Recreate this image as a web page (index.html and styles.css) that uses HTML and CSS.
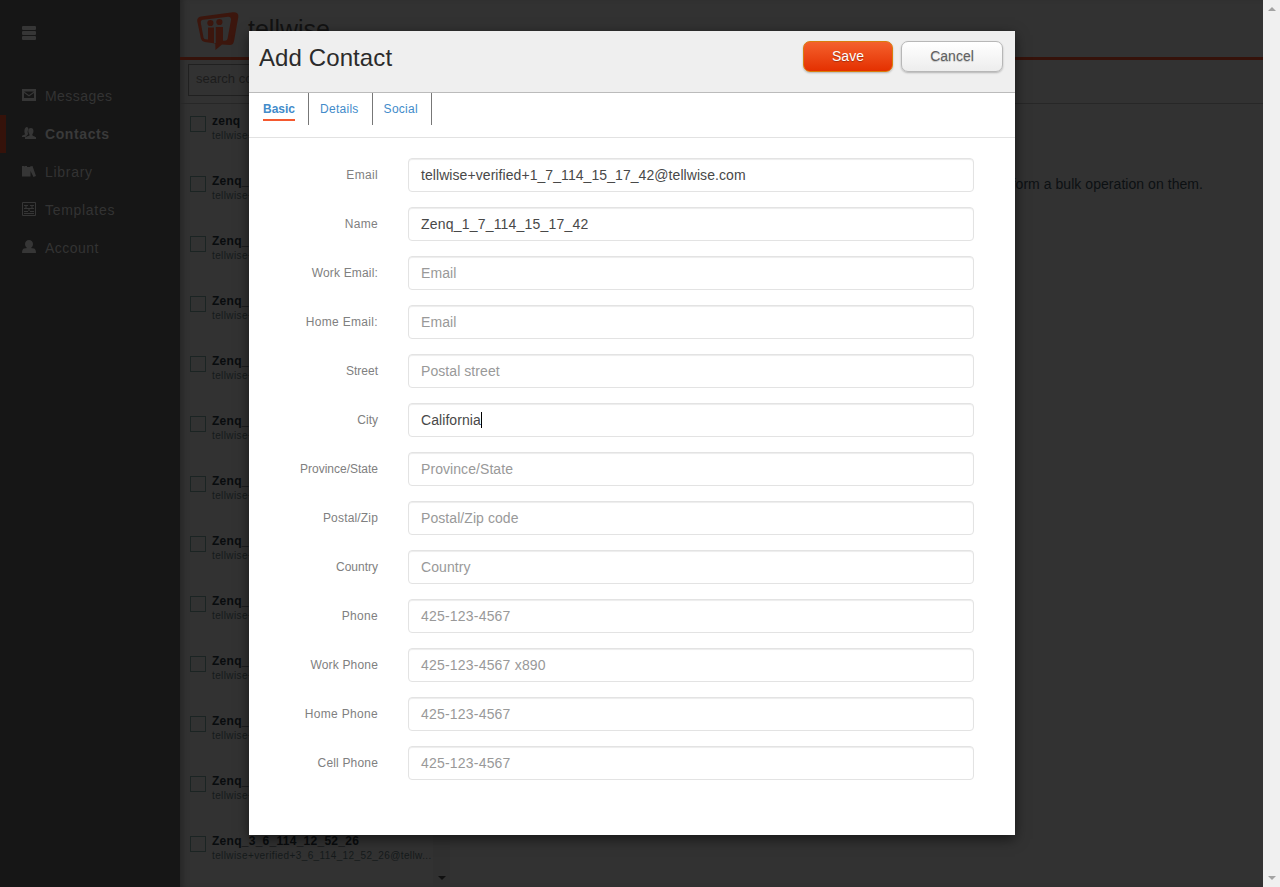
FILE: index.html
```
<!DOCTYPE html>
<html lang="en">
<head>
<meta charset="utf-8">
<title>Tellwise - Contacts</title>
<link rel="stylesheet" href="styles.css">
</head>
<body>
<div class="app">
  <nav class="sidebar">
    <svg class="menu" width="14" height="14" viewBox="0 0 14 14"><rect width="14" height="4" rx="1"/><rect y="5" width="14" height="4" rx="1"/><rect y="10" width="14" height="4" rx="1"/></svg>
    <a class="nav-item"><svg width="14" height="14" viewBox="0 0 14 14"><path fill-rule="evenodd" d="M0 1h14v12H0zM2 5v5h10V5L7 8.500zM2 3.500L7 7l5-3.500z"/></svg>Messages</a>
    <a class="nav-item active"><svg width="14" height="14" viewBox="0 0 14 14"><path d="M4.500 1C6 1 6.500 2 6.300 3.500 5.300 5 5.500 6.500 6.300 8L3.500 11H0V9.700L3.300 8.300C2 7 2 1.500 4.500 1z"/><path d="M8.800 2C11 2 12 4 11.300 6.500L10.300 8.600 10.500 9.600 14 11.300V13H3V11.300L7.500 9.600 7.500 8.500C5.500 5 6 2 8.800 2z"/></svg>Contacts</a>
    <a class="nav-item wide"><svg width="14" height="14" viewBox="0 0 14 14"><path d="M0 2h2l.500.500.500-.500h2v1h3V2.500L10.500 2 14 12l-2.500 1L8.500 7v5.500H0z"/></svg>Library</a>
    <a class="nav-item wide"><svg width="14" height="14" viewBox="0 0 14 14"><path class="line" d="M.5.5h13v13H.5zM2 3.500h4M8 3.500h4M2 6.500h10M2 9.500h4M8 9.500h4M2 11.500h10M4 4v2M10 4v2M7 7v2"/></svg>Templates</a>
    <a class="nav-item"><svg width="14" height="14" viewBox="0 0 14 14"><path d="M7 0c2.500 0 4 1.700 4 4 0 2-1 3-2 4l3 .5q2 .5 2 4.500H0Q0 9 2 8.500L5 8C4 7 3 6 3 4 3 1.700 4.500 0 7 0z"/></svg>Account</a>
  </nav>
  <main class="main">
    <header class="brand">
      <svg width="42" height="39" viewBox="0 0 42 39"><path class="mark" fill-rule="evenodd" d="M4 4.500L36 .2Q42 0 41.300 5L37 29Q36.300 33 33 33L25 32.500 18.500 38 18.300 31.500 8 30Q4.500 29.500 3.800 26L.2 9Q0 5 4 4.500zM6 7.800Q3.500 8.200 3.800 11L6.500 25.500Q6.800 27 8.500 27.200L11 27.500V15.500H17V31H18.800V15H26V28.700L28 28.800Q30 28.800 30.500 27L34 8Q34.200 4.500 31 4.800z"/><circle class="mark" cx="13.400" cy="11" r="3.100"/><circle class="mark" cx="22.400" cy="10" r="3.100"/></svg>
      <span class="wordmark">tellwise</span>
    </header>
    <div class="toolbar"><div class="search">search contacts</div></div>
    <div class="panes">
      <div class="list">
        <div class="contacts" id="contacts"></div>
        <div class="list-scroll"><i class="down dark"></i></div>
      </div>
      <section class="detail">form a bulk operation on them.</section>
    </div>
  </main>
  <div class="page-scroll"><i class="up"></i><i class="down"></i></div>
</div>
<div class="modal">
  <div class="modal-head"><h1>Add Contact</h1><button class="btn save">Save</button><button class="btn cancel">Cancel</button></div>
  <div class="tabs"><a class="tab current"><span>Basic</span></a><a class="tab">Details</a><a class="tab">Social</a></div>
  <form class="form">
    <label class="roomy">Email</label><div class="field address">tellwise+verified+1_7_114_15_17_42@tellwise.com</div>
    <label class="roomy">Name</label><div class="field number">Zenq_1_7_114_15_17_42</div>
    <label>Work Email:</label><div class="field hint">Email</div>
    <label class="roomy">Home Email:</label><div class="field hint">Email</div>
    <label class="tight">Street</label><div class="field hint">Postal street</div>
    <label class="tight">City</label><div class="field">California<i class="caret"></i></div>
    <label class="tight">Province/State</label><div class="field hint">Province/State</div>
    <label>Postal/Zip</label><div class="field hint">Postal/Zip code</div>
    <label class="tight">Country</label><div class="field hint">Country</div>
    <label class="roomy">Phone</label><div class="field hint number">425-123-4567</div>
    <label>Work Phone</label><div class="field hint number">425-123-4567 x890</div>
    <label class="roomy">Home Phone</label><div class="field hint number">425-123-4567</div>
    <label>Cell Phone</label><div class="field hint number">425-123-4567</div>
  </form>
</div>
<script src="app.js"></script>
</body>
</html>
```
FILE: styles.css
```
* { box-sizing: border-box; }
body { margin: 0; font-family: "Liberation Sans", Arial, sans-serif; font-size: 14px; overflow: hidden; }
.app { display: flex; height: 887px; background: #323232; }
.sidebar { width: 180px; background: #161616; padding-top: 26px; display: flex; flex-direction: column; flex-shrink: 0; }
.sidebar svg { fill: #363636; flex-shrink: 0; }
.sidebar .line { fill: none; stroke: #363636; }
.menu { margin: 0 0 37px 22px; }
.nav-item { display: flex; align-items: center; height: 38px; padding-left: 22px; gap: 9px; color: #333; letter-spacing: .45px; }
.nav-item svg { margin-top: -2px; }
.nav-item.wide { letter-spacing: .7px; }
.nav-item.active { font-weight: bold; color: #3a3a3a; letter-spacing: .6px; border-left: 6px solid #35120a; padding-left: 16px; border-radius: 0 2px 2px 0; }
.main { flex: 1; min-width: 0; display: flex; flex-direction: column; box-shadow: inset 6px 0 6px -4px #242424; }
.brand { height: 60px; border-bottom: 3px solid #35120a; padding: 12px 0 0 17px; display: flex; gap: 9px; flex-shrink: 0; }
.mark { fill: #3c160d; }
.wordmark { font-size: 25px; line-height: 34px; color: #121212; }
.toolbar { height: 44px; padding: 4px 8px; border-bottom: 1px solid #272727; flex-shrink: 0; }
.search { width: 240px; height: 32px; border: 1px solid #202020; padding: 0 7px; font-size: 13px; line-height: 28px; color: #1c1c1c; }
.panes { display: flex; flex: 1; min-height: 0; }
.list { width: 270px; display: flex; overflow: hidden; }
.contacts { width: 253px; }
.contact { display: flex; height: 60px; padding: 12px 0 0 10px; gap: 6px; }
.box { width: 16px; height: 16px; border: 1px solid #1b2423; flex-shrink: 0; }
.who { margin-top: -4px; width: 222px; }
.name { font-weight: bold; font-size: 12px; line-height: 18px; color: #090c0e; letter-spacing: .27px; }
.mail { font-size: 10px; line-height: 12px; color: #151a1b; letter-spacing: .39px; white-space: nowrap; }
.list-scroll { width: 17px; background: #303030; display: flex; align-items: flex-end; justify-content: center; padding-bottom: 7px; }
.detail { flex: 1; padding: 72px 60px 0 0; text-align: right; color: #0c1012; line-height: 16px; letter-spacing: .05px; }
.page-scroll { width: 17px; background: #f0f0f0; display: flex; flex-direction: column; justify-content: space-between; align-items: center; padding: 7px 0; }
.up, .down { border: 4px solid transparent; border-top-width: 0; border-bottom: 4px solid #a3a3a3; }
.down { border-bottom-width: 0; border-top: 4px solid #a3a3a3; }
.down.dark { border-top-color: #101010; }
.modal { position: absolute; left: 249px; top: 31px; width: 766px; height: 804px; background: #fff; box-shadow: 0 4px 12px rgba(0,0,0,.55); }
.modal-head { height: 62px; background: #efefef; border-bottom: 1px solid #bbb; display: flex; align-items: flex-start; gap: 8px; padding: 10px 12px 0 10px; }
h1 { flex: 1; margin: 3px 0 0; font-size: 24px; line-height: 28px; font-weight: normal; color: #2b2b2b; letter-spacing: .1px; }
.btn { font: 14px/28px "Liberation Sans", Arial, sans-serif; height: 31px; padding: 0 0 1px; border-radius: 7px; box-shadow: 0 1px 2px rgba(0,0,0,.25); }
.save { width: 90px; color: #fff; border: 1px solid #da7c0c; background: linear-gradient(#f4612d, #e43000); text-shadow: 0 1px 1px rgba(0,0,0,.3); }
.cancel { width: 102px; color: #606060; border: 1px solid #b7b7b7; background: linear-gradient(#fff, #ededed); text-shadow: 0 1px 1px rgba(0,0,0,.2); }
.tabs { display: flex; height: 45px; border-bottom: 1px solid #e2e2e2; padding-left: 3px; font-size: 12px; color: #428bca; }
.tab { height: 32px; padding: 8px 13px 0 11px; line-height: 16px; border-right: 1px solid #777; letter-spacing: .27px; }
.tab.current { font-weight: bold; letter-spacing: 0; }
.current span { display: block; height: 20px; border-bottom: 2px solid #f4592f; }
.form { display: grid; grid-template-columns: 129px 566px; grid-auto-rows: 34px; column-gap: 30px; row-gap: 15px; padding-top: 20px; }
.form label { text-align: right; font-size: 12px; line-height: 34px; color: #808080; letter-spacing: .17px; }
.form .roomy { letter-spacing: .33px; }
.form .tight { letter-spacing: 0; }
.field { display: flex; align-items: center; border: 1px solid #e3e3e3; border-radius: 4px; padding: 0 12px; color: #484848; letter-spacing: .07px; box-shadow: inset 0 1px 1px rgba(0,0,0,.075); }
.number { letter-spacing: .2px; }
.hint { color: #999; }
.caret { width: 1px; height: 16px; background: #000; }
```
FILE: app.js
```
const contacts = [["zenq", "tellwise+"]];
for (let i = 0; i < 5; i++) contacts.push(["Zenq_1", "tellwise+"]);
for (let i = 0; i < 6; i++) contacts.push(["Zenq_3", "tellwise+"]);
contacts.push(["Zenq_3_6_114_12_52_26", "tellwise+verified+3_6_114_12_52_26@tellw..."]);
document.getElementById("contacts").innerHTML = contacts.map(([name, mail]) =>
  `<div class="contact"><span class="box"></span><div class="who"><div class="name">${name}</div><div class="mail">${mail}</div></div></div>`
).join("");
```
